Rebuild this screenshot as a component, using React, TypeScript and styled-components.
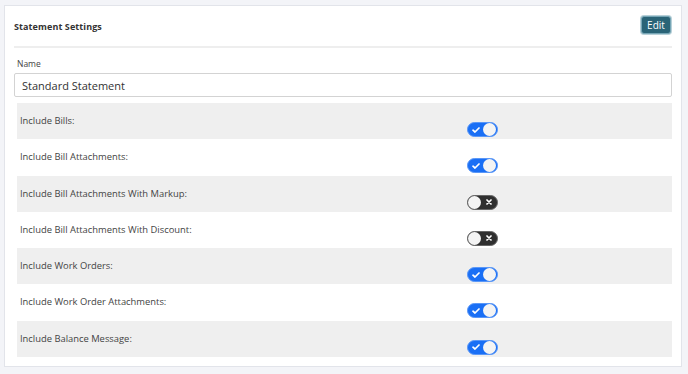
import React from "react";
import styled, { createGlobalStyle } from "styled-components";

const GlobalStyle = createGlobalStyle`
  html, body {
    margin: 0;
    padding: 0;
    background: #f3f4f8;
    font-family: "Open Sans", "Noto Sans", sans-serif;
    color: #333;
  }
  * { box-sizing: border-box; }
`;

const Page = styled.div`
  padding: 5px 6px 7px 4px;
`;

const Card = styled.div`
  background: #fff;
  border: 1px solid #e2e4ea;
  padding: 0 9px 9px 9px;
  height: 362px;
`;

const Header = styled.div`
  display: flex;
  align-items: center;
  justify-content: space-between;
  height: 42px;
  border-bottom: 2px solid #eeeeee;
`;

const Title = styled.h3`
  margin: 0;
  font-size: 9px;
  font-weight: 700;
  color: #333;
  letter-spacing: 0.1px;
`;

const EditButton = styled.button`
  width: 30px;
  height: 18px;
  padding: 0;
  border-radius: 3px;
  border: 1px solid #76a6b6;
  box-shadow: 0 0 0 1px #b7d0d8;
  background: #2a6477;
  color: #fff;
  font-family: "Open Sans", sans-serif;
  font-size: 10px;
  margin-right: 1px;
  margin-top: -2px;
`;

const FieldLabel = styled.label`
  display: block;
  font-size: 8.5px;
  color: #444;
  margin: 10px 0 4px 3px;
`;

const TextInput = styled.input`
  display: block;
  width: 100%;
  height: 24px;
  border: 1px solid #d3d3d3;
  border-radius: 2px;
  padding: 0 7px;
  font-family: "Open Sans", sans-serif;
  font-size: 11px;
  color: #333;
  outline: none;
`;

const Rows = styled.div`
  margin: 6px 0 0 3px;
`;

const Row = styled.div<{ $shaded: boolean }>`
  display: grid;
  grid-template-columns: 450px 1fr;
  height: 36.3px;
  background: ${(p) => (p.$shaded ? "#efefef" : "#fff")};
`;

const RowLabel = styled.span`
  font-size: 9.4px;
  color: #444;
  padding: 12px 0 0 3px;
  line-height: 12px;
`;

const ToggleCell = styled.div`
  padding-top: 17px;
`;

const Track = styled.span<{ $on: boolean }>`
  position: relative;
  display: inline-block;
  width: 31px;
  height: 15px;
  border-radius: 8px;
  background: ${(p) => (p.$on ? "#1a6ff5" : "#2f2f2f")};
  border: 1px solid ${(p) => (p.$on ? "#5a97f7" : "#666")};
`;

const Knob = styled.span<{ $on: boolean }>`
  position: absolute;
  top: 0;
  left: ${(p) => (p.$on ? "15px" : "0")};
  width: 13px;
  height: 13px;
  border-radius: 50%;
  background: #f4f4f4;
`;

const Mark = styled.svg<{ $on: boolean }>`
  position: absolute;
  top: 3.5px;
  left: ${(p) => (p.$on ? "4px" : "18px")};
`;

function Toggle({ on }: { on: boolean }) {
  return (
    <Track $on={on}>
      {on ? (
        <Mark $on width="8" height="6" viewBox="0 0 8 6">
          <path d="M1 3.2 L3 5 L7 1" stroke="#fff" strokeWidth="1.7" fill="none" strokeLinecap="round" strokeLinejoin="round" />
        </Mark>
      ) : (
        <Mark $on={false} width="6" height="6" viewBox="0 0 6 6">
          <path d="M1 1 L5 5 M5 1 L1 5" stroke="#fff" strokeWidth="1.7" strokeLinecap="round" />
        </Mark>
      )}
      <Knob $on={on} />
    </Track>
  );
}

const settings = [
  { label: "Include Bills:", on: true },
  { label: "Include Bill Attachments:", on: true },
  { label: "Include Bill Attachments With Markup:", on: false },
  { label: "Include Bill Attachments With Discount:", on: false },
  { label: "Include Work Orders:", on: true },
  { label: "Include Work Order Attachments:", on: true },
  { label: "Include Balance Message:", on: true },
];

export default function App() {
  return (
    <>
      <GlobalStyle />
      <Page>
        <Card>
          <Header>
            <Title>Statement Settings</Title>
            <EditButton>Edit</EditButton>
          </Header>
          <FieldLabel>Name</FieldLabel>
          <TextInput defaultValue="Standard Statement" />
          <Rows>
            {settings.map((s, i) => (
              <Row key={s.label} $shaded={i % 2 === 0}>
                <RowLabel>{s.label}</RowLabel>
                <ToggleCell>
                  <Toggle on={s.on} />
                </ToggleCell>
              </Row>
            ))}
          </Rows>
        </Card>
      </Page>
    </>
  );
}
